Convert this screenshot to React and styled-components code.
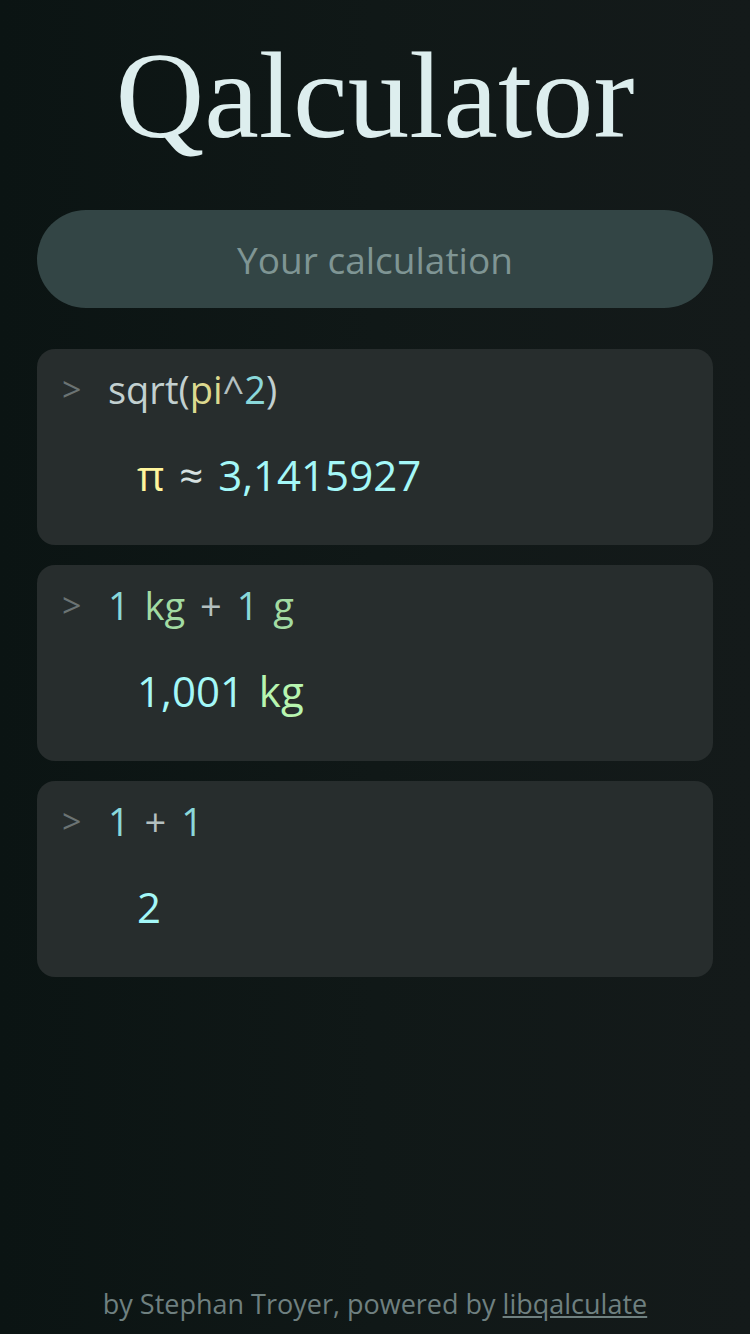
import React from "react";
import styled, { createGlobalStyle } from "styled-components";

const GlobalStyle = createGlobalStyle`
  html, body {
    margin: 0;
    padding: 0;
  }
  body {
    background: linear-gradient(to right, #0b1413 0%, #101817 50%, #141a1a 100%);
    font-family: "Open Sans", "Noto Sans", sans-serif;
    min-height: 100vh;
  }
  * { box-sizing: border-box; }
`;

const Page = styled.div`
  min-height: 100vh;
  display: flex;
  flex-direction: column;
  padding: 0 37px;
`;

const Title = styled.h1`
  margin: 34px 0 0;
  font-family: "Liberation Serif", "Times New Roman", serif;
  font-weight: 400;
  font-size: 123px;
  line-height: 123px;
  color: #ddeeee;
  text-align: center;
`;

const Input = styled.input`
  margin-top: 53px;
  height: 98px;
  width: 100%;
  border: none;
  outline: none;
  border-radius: 49px;
  background: #334545;
  color: #dfe9e9;
  font-family: "Open Sans", "Noto Sans", sans-serif;
  font-size: 37px;
  text-align: center;
  padding: 0 30px;
  &::placeholder {
    color: #7f9594;
  }
`;

const History = styled.div`
  margin-top: 41px;
  display: flex;
  flex-direction: column;
  gap: 20px;
`;

const Card = styled.div`
  background: #272d2d;
  border-radius: 18px;
  padding: 20px 25px 45px;
  display: flex;
  flex-direction: column;
  gap: 41px;
`;

const ExprRow = styled.div`
  display: flex;
  align-items: center;
  height: 40px;
  font-size: 38px;
  line-height: 40px;
  word-spacing: 5px;
  white-space: pre;
`;

const Prompt = styled.span`
  color: #6b7373;
  font-size: 34px;
  width: 46px;
  flex: none;
`;

const ResultRow = styled.div`
  height: 50px;
  line-height: 50px;
  font-size: 42px;
  word-spacing: 4px;
  padding-left: 75px;
  white-space: pre;
`;

const colors = {
  text: "#c2d0d0",
  op: "#b4c0c0",
  var: "#dcd98f",
  num: "#8ad8da",
  unit: "#a2dba2",
  rvar: "#fff59d",
  rop: "#d6e0e0",
  rnum: "#a4f8f8",
  runit: "#b8f5b0",
};

const Tok = styled.span`
  color: ${(p) => colors[p.$kind]};
`;

const Footer = styled.footer`
  margin-top: auto;
  padding-bottom: 12px;
  text-align: center;
  font-size: 27px;
  line-height: 36px;
  color: #6f8080;
`;

const FooterLink = styled.a`
  color: #6f8080;
  text-decoration: underline;
`;

const entries = [
  {
    expr: [
      ["sqrt(", "text"],
      ["pi", "var"],
      ["^", "op"],
      ["2", "num"],
      [")", "text"],
    ],
    result: [
      ["π", "rvar"],
      [" ≈ ", "rop"],
      ["3,1415927", "rnum"],
    ],
  },
  {
    expr: [
      ["1", "num"],
      [" kg", "unit"],
      [" + ", "op"],
      ["1", "num"],
      [" g", "unit"],
    ],
    result: [
      ["1,001", "rnum"],
      [" kg", "runit"],
    ],
  },
  {
    expr: [
      ["1", "num"],
      [" + ", "op"],
      ["1", "num"],
    ],
    result: [["2", "rnum"]],
  },
];

export default function App() {
  return (
    <>
      <GlobalStyle />
      <Page>
        <Title>Qalculator</Title>
        <Input placeholder="Your calculation" />
        <History>
          {entries.map((e, i) => (
            <Card key={i}>
              <ExprRow>
                <Prompt>&gt;</Prompt>
                {e.expr.map(([t, k], j) => (
                  <Tok key={j} $kind={k}>
                    {t}
                  </Tok>
                ))}
              </ExprRow>
              <ResultRow>
                {e.result.map(([t, k], j) => (
                  <Tok key={j} $kind={k}>
                    {t}
                  </Tok>
                ))}
              </ResultRow>
            </Card>
          ))}
        </History>
        <Footer>
          by Stephan Troyer, powered by{" "}
          <FooterLink href="#">libqalculate</FooterLink>
        </Footer>
      </Page>
    </>
  );
}
